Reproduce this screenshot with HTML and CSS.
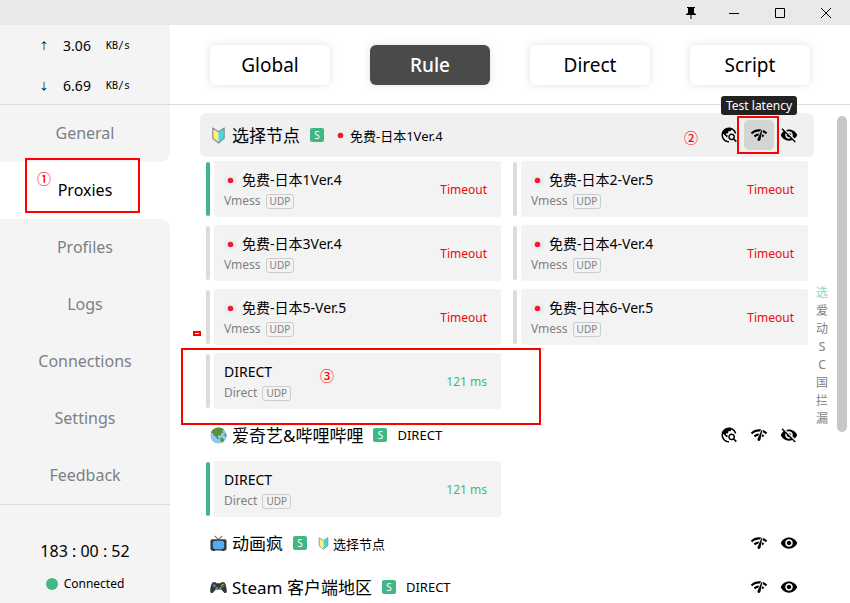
FILE: index.html
```html
<!DOCTYPE html>
<html lang="zh-CN">
<head>
<meta charset="utf-8">
<title>Proxies</title>
<link rel="stylesheet" href="styles.css">
</head>
<body>
<svg class="defs" aria-hidden="true">
  <symbol id="eye" viewBox="0 0 24 24"><path d="M12 4.500C7 4.500 2.730 7.610 1 12c1.730 4.390 6 7.500 11 7.500s9.270-3.110 11-7.500c-1.730-4.390-6-7.500-11-7.500zM12 17c-2.760 0-5-2.240-5-5s2.240-5 5-5 5 2.240 5 5-2.240 5-5 5zm0-8c-1.660 0-3 1.340-3 3s1.340 3 3 3 3-1.340 3-3-1.340-3-3-3z"/></symbol>
  <symbol id="eye-off" viewBox="0 0 24 24"><path d="M12 7c2.760 0 5 2.240 5 5 0 .65-.13 1.260-.36 1.830l2.920 2.920c1.510-1.260 2.700-2.890 3.430-4.750-1.730-4.390-6-7.500-11-7.500-1.400 0-2.740.25-3.980.7l2.160 2.160C10.740 7.130 11.350 7 12 7zM2 4.270l2.280 2.280.46.46C3.080 8.300 1.780 10.020 1 12c1.730 4.390 6 7.500 11 7.500 1.550 0 3.030-.3 4.380-.84l.42.42L19.730 22 21 20.730 3.270 3 2 4.270zM7.530 9.800l1.550 1.550c-.05.21-.08.43-.08.65 0 1.660 1.340 3 3 3 .22 0 .44-.03.65-.08l1.550 1.550c-.67.33-1.410.53-2.200.53-2.760 0-5-2.240-5-5 0-.79.2-1.530.53-2.200zm4.310-.78l3.150 3.150.02-.16c0-1.660-1.340-3-3-3l-.17.01z"/></symbol>
  <symbol id="latency" viewBox="0 0 24 24"><path d="M15.900 5c-.17 0-.32.09-.41.23l-.07.15-5.180 11.650c-.16.29-.26.61-.26.96 0 1.110.9 2.010 2.010 2.010.96 0 1.770-.68 1.960-1.590l.01-.03L16.400 5.500c0-.28-.22-.5-.5-.5zM1 9l2 2c2.880-2.880 6.790-4.080 10.530-3.620l1.190-2.680C9.890 3.840 4.740 5.270 1 9zm20 2l2-2c-1.640-1.640-3.550-2.820-5.590-3.570l-.53 2.820c1.500.62 2.900 1.530 4.120 2.750zm-4 4l2-2c-.8-.8-1.700-1.420-2.660-1.890l-.55 2.920c.42.27.83.59 1.210.97zM5 13l2 2c1.130-1.130 2.560-1.790 4.030-2l1.280-2.880c-2.630-.08-5.300.87-7.310 2.880z"/></symbol>
  <symbol id="explore" viewBox="0 0 24 24"><path d="M19.300 16.900c.4-.7.7-1.500.7-2.400 0-2.500-2-4.500-4.500-4.500S11 12 11 14.500s2 4.500 4.500 4.500c.9 0 1.700-.3 2.400-.7l3.200 3.200 1.400-1.400-3.200-3.200zm-3.800.1c-1.400 0-2.500-1.100-2.500-2.500s1.100-2.500 2.500-2.500 2.500 1.100 2.500 2.500-1.100 2.500-2.500 2.500zM12 20v2C6.480 22 2 17.520 2 12S6.480 2 12 2c4.840 0 8.870 3.440 9.800 8h-2.070c-.64-2.460-2.400-4.470-4.730-5.410V5c0 1.100-.9 2-2 2h-2v2c0 .55-.45 1-1 1H8v2h2v3H9l-4.790-4.790C4.080 10.790 4 11.380 4 12c0 4.410 3.590 8 8 8z"/></symbol>
  <symbol id="sprout" viewBox="0 0 18 18"><path d="M3 1 9 5v12L3 12z" fill="#fff27a"/><path d="M15 1 9 5v12l6-5z" fill="#48d8d8"/><path d="M3 1 9 5l6-4v11l-6 5-6-5z" fill="none" stroke="#87929c" stroke-width="1.300" stroke-linejoin="round"/></symbol>
  <symbol id="flag" viewBox="0 0 14 14"><rect y="2" width="14" height="10" rx="1" fill="#eeeeee"/><circle cx="7" cy="7" r="3" fill="#ed1b2f"/></symbol>
  <symbol id="globe" viewBox="0 0 18 18"><circle cx="9" cy="9" r="8.500" fill="#88c9f9"/><path d="M1 6C2 3 5 .6 9 .5c3 0 5 1 6 2.500l-2 1 1 2-2 .5-1 3-2-1-1 2 2 2-2 .5-2-3-2-1-1-3-2 1zM11 11l3 1 1 2-2 2.500-2-2zM15.500 6l2 2-.2 3-1.800-2z" fill="#5c913b"/></symbol>
  <symbol id="tv" viewBox="0 0 18 18"><path d="M9 5 5 1M9 5l4-4" stroke="#66757f" stroke-width="1.200"/><path d="M3 15h3l-1 2H3zM12 15h3v2h-2z" fill="#31373d"/><rect x=".5" y="4.500" width="17" height="12" rx="2" fill="#31373d"/><rect x="3" y="6" width="12" height="9" rx="2.500" fill="#55acee"/></symbol>
  <symbol id="pad" viewBox="0 0 18 18"><path d="M3 3.500h3l1 1h4l1-1h3c1.500 1 2.500 5 2.800 9 .1 2.500-1.800 3.200-3.300 1.500L12 11H6l-2.500 3C2 15.700.1 15 .2 12.500.5 8.500 1.500 4.500 3 3.500z" fill="#31373d"/><circle cx="4.500" cy="7" r="1.500" fill="#738492"/><circle cx="7" cy="9.500" r="1.300" fill="#738492"/><circle cx="11" cy="9.500" r="1.300" fill="#738492"/><circle cx="13.500" cy="5.700" r=".8" fill="#ffcc4d"/><circle cx="12.200" cy="7" r=".8" fill="#55acee"/><circle cx="14.800" cy="7" r=".8" fill="#dd2e44"/><circle cx="13.500" cy="8.200" r=".8" fill="#78b159"/></symbol>
</svg>

<div class="window">
  <header class="titlebar">
    <button class="pin" aria-label="Pin"><svg width="14" height="14" viewBox="0 0 14 14"><path d="M3 1h8v1h-1v5l2 1v1H2V8l2-1V2H3zM6.500 9h1v4h-1z"/></svg></button>
    <button aria-label="Minimize"><svg width="12" height="12" viewBox="0 0 12 12"><path d="M1 6h10v1H1z"/></svg></button>
    <button aria-label="Maximize"><svg width="12" height="12" viewBox="0 0 12 12"><path d="M1.500 1.500h9v9h-9z" fill="none" stroke="#000"/></svg></button>
    <button aria-label="Close"><svg width="12" height="12" viewBox="0 0 12 12"><path d="m1 1 10 10M11 1 1 11" stroke="#000"/></svg></button>
  </header>

  <aside class="sidebar">
    <div class="traffic">
      <div class="rate"><span class="arrow">↑</span><span class="num">3.06</span><span class="unit">KB/s</span></div>
      <div class="rate"><span class="arrow">↓</span><span class="num">6.69</span><span class="unit">KB/s</span></div>
    </div>
    <nav class="nav">
      <a href="#general" class="before">General</a>
      <a href="#proxies" class="active" aria-current="page">Proxies</a>
      <a href="#profiles" class="after">Profiles</a>
      <a href="#logs">Logs</a>
      <a href="#connections">Connections</a>
      <a href="#settings">Settings</a>
      <a href="#feedback">Feedback</a>
    </nav>
    <div class="status">
      <div class="uptime">183 : 00 : 52</div>
      <div class="connected"><i class="dot"></i>Connected</div>
    </div>
  </aside>

  <main class="main">
    <div class="modes">
      <button>Global</button>
      <button class="selected">Rule</button>
      <button>Direct</button>
      <button>Script</button>
    </div>
    <div class="content">
      <div class="groups">
        <section>
          <div class="group-head hovered">
            <svg class="emoji"><use href="#sprout"/></svg>
            <h2>选择节点</h2><span class="badge">S</span>
            <span class="now"><svg class="flag"><use href="#flag"/></svg>免费-日本1Ver.4</span>
            <div class="actions">
              <button aria-label="Locate"><svg><use href="#explore"/></svg></button>
              <button class="hot" aria-labelledby="tip"><svg><use href="#latency"/></svg><span class="tooltip" id="tip" role="tooltip">Test latency</span></button>
              <button aria-label="Hide"><svg><use href="#eye-off"/></svg></button>
            </div>
          </div>
          <div class="cards">
            <article class="proxy current"><div class="card"><div><div class="name"><svg class="flag"><use href="#flag"/></svg>免费-日本1Ver.4</div><div class="meta">Vmess<span class="udp">UDP</span></div></div><span class="delay timeout">Timeout</span></div></article>
            <article class="proxy"><div class="card"><div><div class="name"><svg class="flag"><use href="#flag"/></svg>免费-日本2-Ver.5</div><div class="meta">Vmess<span class="udp">UDP</span></div></div><span class="delay timeout">Timeout</span></div></article>
            <article class="proxy"><div class="card"><div><div class="name"><svg class="flag"><use href="#flag"/></svg>免费-日本3Ver.4</div><div class="meta">Vmess<span class="udp">UDP</span></div></div><span class="delay timeout">Timeout</span></div></article>
            <article class="proxy"><div class="card"><div><div class="name"><svg class="flag"><use href="#flag"/></svg>免费-日本4-Ver.4</div><div class="meta">Vmess<span class="udp">UDP</span></div></div><span class="delay timeout">Timeout</span></div></article>
            <article class="proxy"><div class="card"><div><div class="name"><svg class="flag"><use href="#flag"/></svg>免费-日本5-Ver.5</div><div class="meta">Vmess<span class="udp">UDP</span></div></div><span class="delay timeout">Timeout</span></div></article>
            <article class="proxy"><div class="card"><div><div class="name"><svg class="flag"><use href="#flag"/></svg>免费-日本6-Ver.5</div><div class="meta">Vmess<span class="udp">UDP</span></div></div><span class="delay timeout">Timeout</span></div></article>
            <article class="proxy"><div class="card"><div><div class="name">DIRECT</div><div class="meta">Direct<span class="udp">UDP</span></div></div><span class="delay">121 ms</span></div></article>
          </div>
        </section>
        <section>
          <div class="group-head">
            <svg class="emoji"><use href="#globe"/></svg>
            <h2>爱奇艺&amp;哔哩哔哩</h2><span class="badge">S</span>
            <span class="now">DIRECT</span>
            <div class="actions">
              <button aria-label="Locate"><svg><use href="#explore"/></svg></button>
              <button aria-label="Test latency"><svg><use href="#latency"/></svg></button>
              <button aria-label="Hide"><svg><use href="#eye-off"/></svg></button>
            </div>
          </div>
          <div class="cards">
            <article class="proxy current"><div class="card"><div><div class="name">DIRECT</div><div class="meta">Direct<span class="udp">UDP</span></div></div><span class="delay">121 ms</span></div></article>
          </div>
        </section>
        <section>
          <div class="group-head">
            <svg class="emoji"><use href="#tv"/></svg>
            <h2>动画疯</h2><span class="badge">S</span>
            <span class="now"><svg class="flag"><use href="#sprout"/></svg>选择节点</span>
            <div class="actions">
              <button aria-label="Test latency"><svg><use href="#latency"/></svg></button>
              <button aria-label="Show"><svg><use href="#eye"/></svg></button>
            </div>
          </div>
        </section>
        <section>
          <div class="group-head">
            <svg class="emoji"><use href="#pad"/></svg>
            <h2>Steam 客户端地区</h2><span class="badge">S</span>
            <span class="now">DIRECT</span>
            <div class="actions">
              <button aria-label="Test latency"><svg><use href="#latency"/></svg></button>
              <button aria-label="Show"><svg><use href="#eye"/></svg></button>
            </div>
          </div>
        </section>
      </div>
      <div class="index"><span class="on">选</span><span>爱</span><span>动</span><span>S</span><span>C</span><span>国</span><span>拦</span><span>漏</span></div>
      <div class="scrollbar"></div>
    </div>
  </main>

  <div class="mark mark-nav"></div><span class="step step-1">①</span>
  <div class="mark mark-test"></div><span class="step step-2">②</span>
  <div class="mark mark-direct"></div><span class="step step-3">③</span>
  <div class="mark mark-speck"></div>
</div>
</body>
</html>
```
FILE: styles.css
```css
* { box-sizing: border-box; }

body {
  margin: 0;
  overflow: hidden;
  background: #fff;
  color: #000;
  font-family: "Noto Sans", "Noto Sans CJK SC", sans-serif;
  font-size: 14px;
}

button {
  border: 0;
  padding: 0;
  background: none;
  color: inherit;
  font: inherit;
}

.defs { display: none; }

.window {
  position: relative;
  display: grid;
  grid-template-columns: 170px 1fr;
  grid-template-rows: 25px 1fr;
  height: 100vh;
}

.titlebar {
  grid-column: 1 / -1;
  display: flex;
  justify-content: flex-end;
  padding-right: 1px;
  background: #e9e9e9;
}

.titlebar button {
  display: grid;
  place-items: center;
  width: 46px;
}

.titlebar .pin { width: 40px; }

/* Sidebar */
.sidebar {
  display: flex;
  flex-direction: column;
  min-height: 0;
}

.traffic {
  flex: none;
  height: 80px;
  border-bottom: 1px solid #dcdcdc;
  background: #f4f4f4;
}

.rate {
  display: grid;
  grid-template-columns: 14px 36px 30px;
  column-gap: 8px;
  align-items: center;
  justify-content: center;
  height: 40px;
  text-align: center;
}

.arrow { font-size: 10px; }

.unit {
  font-family: "DejaVu Sans Mono", monospace;
  font-size: 10px;
}

.nav {
  display: flex;
  flex-direction: column;
}

.nav a {
  height: 57px;
  background: #f4f4f4;
  color: #7b8188;
  font-size: 16px;
  line-height: 57px;
  text-align: center;
  text-decoration: none;
}

.nav .active {
  background: #fff;
  color: #000;
}

.nav .before { border-bottom-right-radius: 10px; }
.nav .after { border-top-right-radius: 10px; }

.status {
  flex: 1;
  border-top: 1px solid #dcdcdc;
  padding-top: 34px;
  background: #f4f4f4;
  text-align: center;
}

.uptime {
  font-size: 16px;
  line-height: 24px;
}

.connected {
  display: flex;
  align-items: center;
  justify-content: center;
  gap: 6px;
  margin-top: 11px;
  font-size: 12px;
  line-height: 20px;
}

.dot {
  width: 12px;
  height: 12px;
  border-radius: 50%;
  background: #41b883;
}

/* Mode switch */
.main {
  display: flex;
  flex-direction: column;
  min-width: 0;
  min-height: 0;
}

.modes {
  display: flex;
  flex: none;
  align-items: center;
  justify-content: space-evenly;
  height: 80px;
  border-bottom: 1px solid #dcdcdc;
}

.modes button {
  width: 120px;
  height: 40px;
  border-radius: 6px;
  background: #fff;
  box-shadow: 0 0 8px rgba(0, 0, 0, .12);
  font-size: 19px;
}

.modes .selected {
  background: #4a4a4a;
  color: #fff;
  font-weight: 500;
}

/* Proxy groups */
.content {
  display: flex;
  flex: 1;
  min-height: 0;
  padding: 8px 3px 4px 30px;
}

.groups {
  flex: 1;
  min-width: 0;
}

.group-head {
  display: flex;
  align-items: center;
  height: 44px;
  padding: 0 10px;
  border-radius: 6px;
}

.hovered { background: #f0f0f0; }

.emoji {
  width: 17px;
  height: 17px;
  margin-right: 5px;
}

.group-head h2 {
  margin: 0;
  padding-bottom: 2px;
  font-size: 17px;
  font-weight: 400;
}

.badge {
  width: 14px;
  height: 14px;
  margin: 0 10px;
  border-radius: 2px;
  background: #41b883;
  color: #fff;
  font-size: 10px;
  line-height: 14px;
  text-align: center;
}

.now {
  display: flex;
  align-items: center;
  gap: 3px;
  font-size: 13px;
}

.flag {
  width: 13px;
  height: 13px;
}

.actions {
  display: flex;
  margin-left: auto;
}

.actions button {
  position: relative;
  display: grid;
  place-items: center;
  width: 30px;
  height: 30px;
  border-radius: 5px;
}

.actions svg {
  width: 18px;
  height: 18px;
}

.actions .hot { background: #d4d4d4; }

.tooltip {
  position: absolute;
  bottom: 35px;
  left: 50%;
  transform: translateX(-50%);
  padding: 0 5px;
  border-radius: 3px;
  background: #222;
  color: #fff;
  font-size: 12px;
  line-height: 19px;
  white-space: nowrap;
}

.cards {
  display: grid;
  grid-template-columns: 1fr 1fr;
  gap: 8px 12px;
  padding: 4px 6px;
}

.proxy {
  display: flex;
  gap: 4px;
}

.proxy::before {
  content: "";
  width: 4px;
  margin: 1px 0;
  border-radius: 2px;
  background: #dcdcdc;
}

.current::before { background: #41b883; }

.card {
  display: flex;
  flex: 1;
  align-items: center;
  justify-content: space-between;
  height: 56px;
  padding: 0 14px 0 10px;
  border-radius: 3px;
  background: #f3f3f3;
}

.name {
  display: flex;
  align-items: center;
  gap: 5px;
  padding-top: 2px;
  line-height: 22px;
}

.meta {
  display: flex;
  align-items: center;
  gap: 5px;
  color: #808080;
  font-size: 12px;
  line-height: 20px;
}

.udp {
  padding: 0 3px;
  border: 1px solid #ccc;
  border-radius: 3px;
  font-size: 10px;
  line-height: 13px;
}

.delay {
  color: #41b883;
  font-size: 12px;
}

.timeout { color: #e80c0c; }

.index {
  display: flex;
  flex-direction: column;
  align-self: center;
  width: 16px;
  color: #808080;
  font-size: 12px;
  line-height: 18px;
  text-align: center;
}

.index .on { color: #8fd8b8; }

.scrollbar {
  width: 10px;
  height: 65%;
  margin: 3px 0 0 7px;
  border-radius: 5px;
  background: #c8c7c6;
}

/* Tutorial annotations laid over the window */
.mark {
  position: absolute;
  border: 2px solid #f00;
  pointer-events: none;
}

.mark-nav { left: 25px; top: 158px; width: 115px; height: 55px; }
.mark-test { left: 737px; top: 116px; width: 42px; height: 38px; }
.mark-direct { left: 181px; top: 348px; width: 360px; height: 77px; }
.mark-speck { left: 193px; top: 331px; width: 8px; height: 5px; }

.step {
  position: absolute;
  color: #f00;
  font-family: "Noto Sans CJK SC", sans-serif;
  font-size: 14px;
  font-weight: 500;
  line-height: 20px;
}

.step-1 { left: 37px; top: 168px; }
.step-2 { left: 684px; top: 127px; }
.step-3 { left: 320px; top: 365px; }
```
